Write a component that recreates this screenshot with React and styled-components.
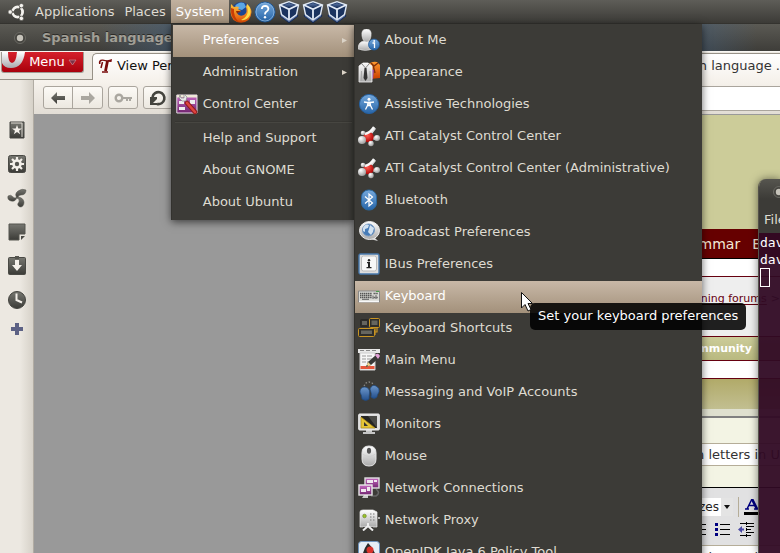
import { useState } from "react";
import styled, { createGlobalStyle, css } from "styled-components";

const GlobalStyle = createGlobalStyle`
  * {
    box-sizing: border-box;
  }

  body {
    margin: 0;
    overflow: hidden;
    background: #999;
    font-family: "DejaVu Sans", sans-serif;
    font-size: 13px;
    line-height: 16px;
  }

  button, input, select {
    margin: 0;
    font: inherit;
    color: inherit;
  }
`;

const Styled = {
  Desktop: styled.div`
    position: relative;
    height: 100vh;
    overflow: hidden;
    display: flex;
    flex-direction: column;
  `,

  Panel: styled.header`
    height: 24px;
    flex: none;
    padding-left: 8px;
    display: flex;
    align-items: center;
    color: #dfdbd2;
    background: linear-gradient(#5e5d58, #3c3b37);
    border-bottom: 1px solid #34332f;
  `,

  PanelMenu: styled.nav`
    height: 100%;
    margin-left: 4px;
    display: flex;
  `,

  PanelItem: styled.div`
    position: relative;
  `,

  PanelButton: styled.button`
    height: 23px;
    padding: 0 5px;
    border: 0;
    white-space: nowrap;
    color: ${({ $open }) => ($open ? "#fff" : "#dfdbd2")};
    background: ${({ $open }) =>
      $open ? "linear-gradient(#c1b19f, #a4927d)" : "none"};
  `,

  Launchers: styled.div`
    display: flex;
    align-items: center;
  `,

  Launcher: styled.button`
    width: 24px;
    height: 23px;
    padding: 0;
    border: 0;
    display: flex;
    align-items: center;
    justify-content: center;
    background: none;
  `,

  Menu: styled.div`
    position: absolute;
    z-index: 3;
    top: 24px;
    left: 0;
    width: ${({ $width }) => $width}px;
    padding: 1px 0 1px 1px;
    background: #3c3b37;
    border-left: 1px solid #33322e;
    box-shadow: 0 2px 8px rgba(0, 0, 0, 0.6);

    ${({ $sub }) =>
      $sub &&
      css`
        top: 0;
        left: 100%;
        padding-left: 0;
      `}
  `,

  MenuItem: styled.button`
    width: 100%;
    height: 32px;
    padding: 0 6px 2px 3px;
    border: 0;
    display: flex;
    align-items: center;
    gap: 5px;
    text-align: left;
    white-space: nowrap;
    color: ${({ $active }) => ($active ? "#fff" : "#dfdbd2")};
    background: ${({ $active }) =>
      $active ? "linear-gradient(#c8b8a7, #a3917b)" : "none"};

    .label {
      flex: 1;
    }
  `,

  MenuIcon: styled.span`
    width: 22px;
    height: 22px;
    flex: none;

    svg {
      display: block;
    }
  `,

  Separator: styled.hr`
    height: 2px;
    margin: 0 2px;
    border: 0;
    border-top: 1px solid #373632;
    background: #474641;
  `,

  TitleBar: styled.div`
    height: 27px;
    flex: none;
    padding: 0 12px;
    display: flex;
    align-items: center;
    gap: 14px;
    color: #a19f96;
    font-weight: 700;
    text-shadow: 0 -1px #2c2b28;
    white-space: nowrap;
    background:
      linear-gradient(90deg, transparent 100px, rgba(66, 94, 124, 0.5) 170px, rgba(66, 94, 124, 0.5) 89%, transparent 97%),
      linear-gradient(#5b5a54, #3e3d39);
  `,

  TabBar: styled.div`
    height: 29px;
    flex: none;
    padding-left: 1px;
    display: flex;
    align-items: flex-start;
    gap: 8px;
    background: #ece8e1;
    border-top: 1px solid #f8f6f2;
    box-shadow: inset 0 -1px #979187;
  `,

  OperaButton: styled.button`
    width: 83px;
    height: 21px;
    padding: 0 6px 0 0;
    border: 1px solid #a09a92;
    border-top: 0;
    border-radius: 0 0 3px 3px;
    display: flex;
    align-items: center;
    justify-content: space-between;
    color: #fff;
    background: linear-gradient(#d5212b, #a9000c);

    svg:first-child {
      align-self: flex-start;
    }
  `,

  Tab: styled.div`
    height: 27px;
    flex: 1;
    margin-top: 1px;
    padding: 0 0 3px 5px;
    border: 1px solid #979187;
    border-width: 1px 0 0 1px;
    border-radius: 5px 0 0 0;
    display: flex;
    align-items: center;
    gap: 4px;
    white-space: nowrap;
    color: #333;
    background: linear-gradient(#fff, #f6f2ec);

    .name {
      color: #111;
    }

    .site {
      margin-left: auto;
    }
  `,

  Body: styled.div`
    flex: 1;
    min-height: 0;
    display: flex;
  `,

  SideBar: styled.aside`
    width: 34px;
    flex: none;
    padding-top: 40px;
    display: flex;
    flex-direction: column;
    align-items: center;
    gap: 14px;
    background: linear-gradient(90deg, #ece8e1 20px, #d6d1c8);
    border-right: 1px solid #b1aca3;
  `,

  SideButton: styled.button`
    width: 20px;
    height: 20px;
    padding: 0;
    border: 0;
    background: none;

    svg {
      display: block;
    }

    &:last-child {
      margin-top: -5px;
    }
  `,

  Main: styled.main`
    flex: 1;
    min-width: 0;
    display: flex;
    flex-direction: column;
  `,

  ToolBar: styled.div`
    height: 35px;
    flex: none;
    padding: 6px 0 4px 9px;
    display: flex;
    gap: 5px;
    background: linear-gradient(#f7f3ed, #e2ddd5);
    border-bottom: 1px solid #999;
  `,

  ButtonGroup: styled.div`
    height: 23px;
    display: flex;
    border: 1px solid #aaa59d;
    border-radius: 3px;
    background: linear-gradient(#fcfaf6, #ece8e0);
  `,

  ToolButton: styled.button`
    width: ${({ $width }) => $width || 28}px;
    padding: 0;
    border: 0;
    display: flex;
    align-items: center;
    justify-content: center;
    background: none;

    & + & {
      border-left: 1px solid #aaa59d;
    }
  `,

  Address: styled.input`
    min-width: 0;
    height: 25px;
    flex: 1;
    border: 1px solid #aaa59d;
    border-right: 0;
    background: #fff;
  `,

  Page: styled.div`
    flex: 1;
    min-height: 0;
    display: flex;
    overflow: hidden;
    background: #999;
  `,

  Forum: styled.section`
    width: 400px;
    margin-left: auto;
    background: #f3f4e4;
  `,

  Strip: styled.div`
    height: ${({ $height }) => $height}px;
    padding-right: ${({ $end }) => $end || 0}px;
    padding-bottom: ${({ $lift }) => $lift || 0}px;
    display: flex;
    align-items: center;
    justify-content: flex-end;
    gap: ${({ $gap }) => $gap || 4}px;
    overflow: hidden;
    white-space: nowrap;
    color: ${({ $color }) => $color || "#333"};
    background: ${({ $fill }) => $fill};
    border-bottom: ${({ $line, $thick }) =>
      $line ? `${$thick ? 2 : 1}px solid ${$line}` : 0};
    font-size: ${({ $size }) => $size || 13}px;
    font-weight: ${({ $bold }) => ($bold ? 700 : 400)};
  `,

  Crumb: styled.a`
    color: #660010;
    text-decoration: underline;
    text-underline-offset: 2px;
  `,

  Editor: styled.div`
    height: 58px;
    padding: 9px 20px 5px 0;
    display: flex;
    flex-direction: column;
    align-items: flex-end;
    gap: 3px;
    background: #e1e1e2;
    border-bottom: 1px solid #b5ad98;
  `,

  EditorRow: styled.div`
    height: 20px;
    padding-right: ${({ $end }) => $end || 0}px;
    display: flex;
    align-items: center;
    gap: ${({ $gap }) => $gap}px;
  `,

  SizeBox: styled.label`
    display: flex;
    height: 18px;
    background: #fff;

    select {
      width: 36px;
      padding: 0 0 0 3px;
      border: 0;
      appearance: none;
      font-size: 12px;
      color: #222;
      background: #fff;
    }

    svg {
      background: #e4e4e4;
    }
  `,

  Divider: styled.span`
    width: 1px;
    height: 20px;
    background: #b5ad98;
  `,

  Terminal: styled.section`
    position: absolute;
    z-index: 1;
    top: 179px;
    right: 0;
    bottom: 0;
    width: 22px;
    overflow: hidden;
    display: flex;
    flex-direction: column;
    border-left: 1px solid #54524a;
    border-radius: 8px 0 0 0;
    box-shadow: 0 0 8px rgba(0, 0, 0, 0.5);
    white-space: nowrap;
  `,

  TerminalTop: styled.div`
    height: 54px;
    flex: none;
    padding: 5px 0 0 5px;
    color: #dfdbd2;
    background: linear-gradient(#56554f, #3c3b37 20px);

    svg {
      display: block;
      margin-left: 7px;
    }

    .title {
      margin-top: 12px;
    }
  `,

  TerminalBody: styled.pre`
    flex: 1;
    margin: 0;
    padding: 1px;
    color: #fff;
    background: rgba(48, 10, 36, 0.95);
    font-family: "DejaVu Sans Mono", monospace;
    font-size: 13px;
    line-height: 17px;

    .cursor {
      width: 10px;
      height: 19px;
      border: 1px solid #fff;
    }
  `,

  Tooltip: styled.div`
    position: absolute;
    z-index: 5;
    top: 303px;
    left: 530px;
    padding: 5px 8px 6px;
    border-radius: 5px;
    white-space: nowrap;
    color: #fff;
    background: rgba(0, 0, 0, 0.87);
  `,

  Pointer: styled.svg`
    position: absolute;
    z-index: 6;
    top: 291px;
    left: 520px;
  `,
};

function Icon({ size = 22, box = 22, children }) {
  return (
    <svg width={size} height={size} viewBox={`0 0 ${box} ${box}`} aria-hidden="true">
      {children}
    </svg>
  );
}

// shared gradients for every drawing on the desktop
function Gradients() {
  const list = {
    blue: ["#76a9dc", "#2765a8"],
    denim: ["#6d97cb", "#234f8c"],
    silver: ["#ffffff", "#aaaaaa"],
    slate: ["#777771", "#3b3b37"],
    purple: ["#c86cc4", "#71246f"],
    opera: ["#ffffff", "#a9a9ad"],
    orange: ["#ff9a2e", "#c83d00"],
    gold: ["#ffc53d", "#e04b05"],
    navy: ["#5c78a8", "#142a55"],
  };
  return (
    <svg width="0" height="0" aria-hidden="true" display="block">
      <defs>
        {Object.entries(list).map(([id, [from, to]]) => (
          <linearGradient key={id} id={id} x1="0" y1="0" x2="0" y2="1">
            <stop offset="0" stopColor={from} />
            <stop offset="1" stopColor={to} />
          </linearGradient>
        ))}
        <radialGradient id="ball" cx="35%" cy="30%" r="75%">
          <stop offset="0" stopColor="#fff" />
          <stop offset="1" stopColor="#999" />
        </radialGradient>
        <radialGradient id="redball" cx="40%" cy="35%" r="70%">
          <stop offset="0" stopColor="#ff5a50" />
          <stop offset="1" stopColor="#a80000" />
        </radialGradient>
      </defs>
    </svg>
  );
}

const UbuntuLogo = () => (
  <Icon size={18} box={18}>
    <circle cx="9.6" cy="9" r="5" fill="none" stroke="#f4f2ee" strokeWidth="2.8" />
    <g stroke="#504f4a" strokeWidth="1.3">
      <path d="M9.6 9L1 9M9.6 9L14 1.4M9.6 9L14 16.6" />
    </g>
    <circle cx="9.6" cy="9" r="3.4" fill="#4d4c47" />
    <g fill="#f4f2ee" stroke="#504f4a" strokeWidth=".7">
      <circle cx="2.2" cy="9" r="2.2" />
      <circle cx="13.4" cy="2.6" r="2.2" />
      <circle cx="13.4" cy="15.4" r="2.2" />
    </g>
  </Icon>
);

const Firefox = () => (
  <Icon>
    <circle cx="11" cy="11" r="10" fill="#1d4590" />
    <path d="M5 5Q9 0 14 2L16 6 12 9 8 8Z" fill="#5aa7e6" />
    <path d="M1 3L4 6Q6 5 9 6L8 8 11 10 7 12Q9 16 14 14 18 11 16 6L17 3Q21 6 21.5 11 21 21 11 21.7 1 21 .5 11Z" fill="url(#gold)" />
    <path d="M17 3Q22 8 20 14 17 20 11 19 18 16 18 9Z" fill="#ffdc46" />
    <path d="M1 7Q0 18 9 21.5Q3 15 4 8Z" fill="#c93e06" />
    <path d="M6 10L11 10 7 12.5Z" fill="#8f2a04" />
  </Icon>
);

const Help = () => (
  <Icon>
    <circle cx="11" cy="11" r="10" fill="url(#blue)" stroke="#1d5797" />
    <circle cx="11" cy="11" r="9" fill="none" stroke="#82afdd" />
    <path d="M7.8 8Q8 4.8 11.2 4.8 14.5 5 14.4 8 14.2 9.6 12 11 11 11.8 11 13.4" fill="none" stroke="#fff" strokeWidth="1.8" />
    <circle cx="11" cy="16.2" r="1.2" fill="#fff" />
  </Icon>
);

const VirtualBox = () => (
  <Icon>
    <path d="M2 15L11 21.8 20 15 18 12 4 12Z" fill="#5e77a8" stroke="#172c57" />
    <path d="M1.5 4L11 .7 20.500 4 18.5 13.5 11 19 3.5 13.5Z" fill="#1b335f" stroke="#dfe8f5" strokeWidth="1.4" />
    <path d="M5 4L11 2.2 17 4 11 7Z" fill="url(#navy)" />
    <path d="M2 4L11 8.3 20 4M11 8.3V18.5" fill="none" stroke="#e4ecf8" strokeWidth="1.8" />
  </Icon>
);

const ControlCenter = () => (
  <Icon>
    <path d="M.8 2H21V20H.8Z" fill="url(#purple)" stroke="#eadfea" />
    <path d="M1 2H21V4.500H1Z" fill="#eee9d7" />
    <path d="M3 8H8V11H3ZM3 14H9V17H3ZM14 7H19V11H14Z" fill="#eee" />
    <path d="M11 10L19 19" stroke="#911c1b" strokeWidth="4.600" strokeLinecap="round" />
    <path d="M11 10L19 19" stroke="#dd4440" strokeWidth="2.600" strokeLinecap="round" />
    <path d="M4 2L5 5 8 5 8 1 11 4 10 8 6 8 3 5Z" fill="#e8e8e8" stroke="#777" strokeWidth=".6" />
  </Icon>
);

const AboutMe = () => (
  <Icon>
    <path d="M0 20Q0 12 7 12Q15 12 15 20Q7 23 0 20Z" fill="url(#silver)" stroke="#ddd" strokeWidth=".6" />
    <path d="M4 7Q3 0 8.5 0T13 7Q12 13 8.5 13T4 7Z" fill="url(#silver)" stroke="#e8e8e8" strokeWidth=".6" />
    <circle cx="16" cy="15.5" r="5.5" fill="url(#blue)" stroke="#1c5798" strokeWidth=".7" />
    <path d="M14.500 14H16.500V19" stroke="#fff" strokeWidth="1.3" fill="none" />
    <circle cx="16.2" cy="12" r=".9" fill="#fff" />
  </Icon>
);

const Appearance = () => (
  <Icon>
    <path d="M11 3Q14 0 19 1L22 4V17L12 18Z" fill="url(#orange)" />
    <path d="M13 2L16 5 20 2M15 4L17 12" stroke="#803009" strokeWidth="1.4" fill="none" />
    <path d="M13 8L16 9 15 18 12 17Z" fill="#9347a1" />
    <path d="M1 5L5 2H10L14 5V21H1Z" fill="url(#silver)" stroke="#f4f4f4" strokeWidth=".8" />
    <path d="M4 3L7.500 7 11 3" fill="#eee" stroke="#888" />
    <path d="M6.500 7H8.500L9.500 17 7.500 20 5.500 17Z" fill="#333" />
    <path d="M3.500 10V20M12 10V20" stroke="#aaa" />
  </Icon>
);

const Accessibility = () => (
  <Icon>
    <circle cx="11" cy="11" r="9.6" fill="url(#blue)" stroke="#2560a0" />
    <circle cx="11" cy="6.2" r="1.5" fill="#fff" />
    <path d="M6 9L9.500 9.500H12.500L16 9M11 9.500V12.500" fill="none" stroke="#fff" strokeWidth="1.500" />
    <path d="M10 9.500H12L12.500 12.500 14.500 16.500M9.500 12.500L7.500 16.500M9.500 12.500L10 9.500M9.500 12.500H12.500" fill="none" stroke="#fff" strokeWidth="1.300" />
  </Icon>
);

const Catalyst = () => (
  <Icon>
    <path d="M4 15L10 12 17 3M10 11L18 14M10 12L14 18M5 8L10 11" stroke="#ddd" strokeWidth="2.6" />
    <circle cx="10.5" cy="12" r="5.2" fill="url(#redball)" />
    <path d="M7 9Q12 8 16 2" stroke="#f8f8f8" strokeWidth="2.3" fill="none" />
    <circle cx="4" cy="15" r="4" fill="url(#ball)" />
    <circle cx="5" cy="8" r="2.3" fill="url(#ball)" />
    <circle cx="13" cy="18.5" r="2.7" fill="url(#ball)" />
    <circle cx="19" cy="13" r="3" fill="url(#ball)" />
  </Icon>
);

const Bluetooth = () => (
  <Icon>
    <rect x="3.5" y="1" width="15" height="20" rx="7" fill="url(#blue)" stroke="#2b689f" />
    <path d="M7 7.5L14.5 14 11 17V5L14.5 8 7 14.5" stroke="#fff" strokeWidth="1.2" fill="none" />
  </Icon>
);

const Broadcast = () => (
  <Icon>
    <path d="M16 16L20 20 12 18Z" fill="#ddd" />
    <ellipse cx="11.5" cy="9.5" rx="10" ry="9" fill="url(#silver)" stroke="#eee" />
    <circle cx="10.500" cy="9" r="6" fill="#477cb7" stroke="#7999c0" />
    <path d="M5 7Q7 2 11 4L10 7 7 8 7 11 5 10ZM12 4L16 7 15 11 13 14 10 11 11 8Z" fill="#d2e2f1" />
  </Icon>
);

const IBus = () => (
  <Icon>
    <rect x="1" y="1" width="20" height="20" rx="1.5" fill="#dedede" stroke="#4879ad" strokeWidth="1.4" />
    <rect x="3.5" y="3" width="15" height="15" rx="2" fill="#f7f7f7" stroke="#bbb" />
    <path d="M9 9H12V14H13.5V15.3H8.5V14H10V10.3H9Z" fill="#222" />
    <circle cx="11" cy="7.2" r="1.2" fill="#222" />
  </Icon>
);

const KeyboardIcon = () => (
  <Icon>
    <path d="M.5 6H21.5V17H.5Z" fill="#d9d9d4" stroke="#888" />
    <path d="M1 16.5H21" stroke="#f8f8f8" strokeWidth="1.5" />
    <path d="M2 8.5H14M2 10.5H14M2 12.5H14M15.5 8.5H20M15.5 12.5H20" stroke="#555" strokeWidth="1.4" strokeDasharray="1.4 .5" />
    <path d="M4 14.3H11M15 10.5V14M18 10V14" stroke="#777" strokeWidth="1.2" />
    <path d="M18 6.5H21" stroke="#4aa34a" />
  </Icon>
);

const Shortcuts = () => (
  <Icon>
    <path d="M17 11V18M19 11V15H17" fill="none" stroke="#c89422" strokeWidth="1.200" />
    <g fill="#2f2e2b" stroke="#c89422">
      <rect x="2.500" y="2.500" width="8" height="7" rx="1" stroke="#2b2a27" />
      <rect x="11.500" y="1.500" width="10" height="9" rx="1" />
      <rect x=".5" y="11.500" width="16" height="8" rx="1" />
    </g>
    <path d="M4 4H9V8H4ZM13.500 3.500H19.500V8H13.500ZM3 13.500H14V17H3Z" fill="#66665f" />
  </Icon>
);

const MainMenu = () => (
  <Icon>
    <path d="M0 0H22V4H0Z" fill="#e8e8e8" />
    <path d="M2 1.5H20" stroke="#888" strokeDasharray="4 2" />
    <path d="M2 4H17V21H2Z" fill="#f6f6f6" stroke="#ccc" />
    <path d="M4 7H8M9 7H14M4 10H8M9 10H14M4 13H8M9 13H12" stroke="#999" />
    <path d="M2.5 17H16.5V20H2.5Z" fill="#e5563b" />
    <path d="M8 18L10 13 18 6 21 9 13 16Z" fill="#393937" />
    <path d="M8 18L10 13 13 16Z" fill="#edd48e" />
    <path d="M17 6Q20 3 22 7L20 10Z" fill="#e1a0d5" />
    <path d="M8 18L9 16 10 17Z" fill="#222" />
  </Icon>
);

const Messaging = () => (
  <Icon>
    <path d="M6 5L8 2 11 1 14 2 16 4" fill="none" stroke="#8b8a86" strokeWidth="1.3" strokeDasharray="1.5 1.7" />
    <path d="M2 11Q2 6 7 6Q12 7 11.5 12 11 15 11 18 8 21 4 18 4 15 2 11Z" fill="url(#denim)" stroke="#1e4b82" strokeWidth=".7" />
    <path d="M12 8Q14 3 18 5Q22 7 21 11Q19 14 19 16Q16 19 13 16Q14 13 12 8Z" fill="url(#denim)" stroke="#1e4b82" strokeWidth=".7" />
  </Icon>
);

const Monitor = () => (
  <Icon>
    <path d="M8 16H14V19H17V21H5V19H8Z" fill="#c5c5c5" />
    <rect x=".7" y="1" width="20.6" height="16" rx="1" fill="#ddd" stroke="#f1f1f1" />
    <path d="M3 3H19V15H3Z" fill="#252524" />
    <path d="M10 3H19V15Z" fill="#4b4b47" />
    <path d="M3 4L17 15H3Z" fill="#e4c537" stroke="#ad8a12" strokeWidth=".7" />
    <path d="M6 9L10 13H6Z" fill="#333" />
  </Icon>
);

const Mouse = () => (
  <Icon>
    <path d="M4 8Q4 1 11 1T18 8V14Q18 21 11 21T4 14Z" fill="url(#silver)" stroke="#e3e3e3" />
    <ellipse cx="11" cy="5.8" rx="2.1" ry="3" fill="#555" />
    <path d="M4.5 9Q11 14 17.5 9" fill="none" stroke="#ccc" strokeWidth=".8" />
  </Icon>
);

const Network = () => (
  <Icon>
    <path d="M18 12Q23 16 18 19H13" stroke="#666" strokeWidth="1.5" fill="none" />
    <rect x="7" y="1" width="14" height="10" fill="url(#purple)" stroke="#e0e0e0" strokeWidth="1.4" />
    <path d="M9 3H15V6H9ZM16 3H19V5H16Z" fill="#f0e7ef" />
    <path d="M6 18H10V21H4Z" fill="#ccc" />
    <rect x="1" y="8" width="13" height="10" fill="url(#purple)" stroke="#e8e8e8" strokeWidth="1.4" />
    <path d="M3 12H8V15H3ZM9 10H12V14H9Z" fill="#f0e7ef" />
  </Icon>
);

const Proxy = () => (
  <Icon>
    <path d="M2 3Q2 1 5 1H15L19 3V18H2Z" fill="url(#silver)" stroke="#eee" strokeWidth=".7" />
    <path d="M12 5H17M12 8H17M12 11H17" stroke="#777" strokeWidth="1.2" strokeDasharray="1.5 1.5" />
    <circle cx="6.5" cy="7" r="1.8" fill="#9ac526" stroke="#647828" strokeWidth=".6" />
    <path d="M5 18H15V22H5Z" fill="#3c3b37" />
    <path d="M10 14V17L5 21.500M10 17L15 21.500" stroke="#eee" strokeWidth="2" fill="none" />
    <path d="M20 9H22" stroke="#ddd" strokeWidth="1.5" />
  </Icon>
);

const OpenJdk = () => (
  <Icon>
    <rect x=".5" y=".5" width="21" height="21" rx="3" fill="#e6edf5" stroke="#6e94be" />
    <path d="M10 2Q17 8 19 20L12 17 4 20Q4 10 10 2Z" fill="#292929" />
    <circle cx="12" cy="9" r="3.5" fill="#d7322b" />
  </Icon>
);

const WindowDot = () => (
  <Icon size={16} box={16}>
    <circle cx="8" cy="8" r="5.500" fill="#45443f" stroke="#6b6a64" />
    <circle cx="8" cy="8" r="3.2" fill="#c6c3ba" />
  </Icon>
);

const SideIcons = {
  Bookmarks: (
    <>
      <path d="M3 2H17V18H3Z" fill="url(#slate)" stroke="#454540" />
      <path d="M4 3H15V17" stroke="#ddd9d1" fill="none" />
      <path d="M10 5L11.3 8.5H15L12 10.7 13.2 14.3 10 12.1 6.8 14.3 8 10.7 5 8.5H8.7Z" fill="#f4f0ea" />
    </>
  ),
  Widgets: (
    <>
      <rect x="1.5" y="1.5" width="17" height="17" rx="2" fill="url(#slate)" stroke="#4a4a45" />
      <path d="M10 3V17M3 10H17M5 5L15 15M15 5L5 15" stroke="#f4f0ea" strokeWidth="2.2" />
      <circle cx="10" cy="10" r="4.8" fill="#f4f0ea" />
      <circle cx="10" cy="10" r="2.2" fill="#555550" />
    </>
  ),
  Unite: (
    <g fill="url(#slate)" stroke="#50504a" strokeWidth=".5">
      <path d="M10 10Q7 6 11 3Q15 0 19 2Q19 7 14 7Q11 7 11 10Z" />
      <path d="M10 9Q9 14 4 13Q0 12 1 8Q4 6 6 9Q8 11 10 9Z" />
      <path d="M10 9Q16 9 17 14Q17 19 13 19Q9 17 12 14Q13 11 10 10Z" />
    </g>
  ),
  Notes: (
    <>
      <path d="M2 2H18V12H12V18H2Z" fill="url(#slate)" stroke="#55554f" />
      <path d="M14 14H18L14 18Z" fill="#494944" />
    </>
  ),
  Transfers: (
    <>
      <rect x="1.5" y="1.5" width="17" height="17" rx="1" fill="url(#slate)" stroke="#4a4a45" />
      <path d="M8 0H12V3H8Z" fill="#55554f" />
      <path d="M8 4H12V9H15L10 15 5 9H8Z" fill="#f4f0ea" />
    </>
  ),
  History: (
    <>
      <circle cx="10" cy="10" r="8.5" fill="url(#slate)" stroke="#44443f" />
      <path d="M9.5 3.5V10L15 12.5" stroke="#f4f0ea" strokeWidth="2" fill="none" />
    </>
  ),
  "Add panel": <path d="M8 4H12V8H16V12H12V16H8V12H4V8H8Z" fill="#5d6285" />,
};

const systemMenu = [
  { label: "Preferences", arrow: true },
  { label: "Administration", arrow: true },
  { label: "Control Center", icon: <ControlCenter /> },
  { separator: true },
  { label: "Help and Support" },
  { label: "About GNOME" },
  { label: "About Ubuntu" },
];

const preferences = [
  ["About Me", <AboutMe />],
  ["Appearance", <Appearance />],
  ["Assistive Technologies", <Accessibility />],
  ["ATI Catalyst Control Center", <Catalyst />],
  ["ATI Catalyst Control Center (Administrative)", <Catalyst />],
  ["Bluetooth", <Bluetooth />],
  ["Broadcast Preferences", <Broadcast />],
  ["IBus Preferences", <IBus />],
  ["Keyboard", <KeyboardIcon />],
  ["Keyboard Shortcuts", <Shortcuts />],
  ["Main Menu", <MainMenu />],
  ["Messaging and VoIP Accounts", <Messaging />],
  ["Monitors", <Monitor />],
  ["Mouse", <Mouse />],
  ["Network Connections", <Network />],
  ["Network Proxy", <Proxy />],
  ["OpenJDK Java 6 Policy Tool", <OpenJdk />],
];

function MenuEntry({ label, icon, arrow, active, onMouseEnter }) {
  return (
    <Styled.MenuItem role="menuitem" $active={active} onMouseEnter={onMouseEnter}>
      <Styled.MenuIcon>{icon}</Styled.MenuIcon>
      <span className="label">{label}</span>
      {arrow && (
        <Icon size={7} box={7}>
          <path d="M1 1L6 3.5 1 6Z" fill="#dcd4c8" />
        </Icon>
      )}
    </Styled.MenuItem>
  );
}

function SystemMenu() {
  const [selected, setSelected] = useState("Keyboard");
  return (
    <Styled.Menu role="menu" $width={183}>
      {systemMenu.map((item, index) =>
        item.separator ? (
          <Styled.Separator key={index} />
        ) : (
          <MenuEntry key={item.label} {...item} active={item.label === "Preferences"} />
        )
      )}
      <Styled.Menu role="menu" $sub $width={348}>
        {preferences.map(([label, icon]) => (
          <MenuEntry
            key={label}
            label={label}
            icon={icon}
            active={label === selected}
            onMouseEnter={() => setSelected(label)}
          />
        ))}
      </Styled.Menu>
    </Styled.Menu>
  );
}

function TopPanel() {
  return (
    <Styled.Panel>
      <UbuntuLogo />
      <Styled.PanelMenu>
        {["Applications", "Places", "System"].map((name) => (
          <Styled.PanelItem key={name}>
            <Styled.PanelButton $open={name === "System"}>{name}</Styled.PanelButton>
            {name === "System" && <SystemMenu />}
          </Styled.PanelItem>
        ))}
      </Styled.PanelMenu>
      <Styled.Launchers>
        <Styled.Launcher aria-label="Firefox"><Firefox /></Styled.Launcher>
        <Styled.Launcher aria-label="Help"><Help /></Styled.Launcher>
        {[1, 2, 3].map((n) => (
          <Styled.Launcher key={n} aria-label={`Virtual machine ${n}`}>
            <VirtualBox />
          </Styled.Launcher>
        ))}
      </Styled.Launchers>
    </Styled.Panel>
  );
}

function Tabs() {
  return (
    <Styled.TabBar>
      <Styled.OperaButton>
        <svg width="24" height="16" viewBox="0 0 24 16" aria-hidden="true">
          <path d="M0 0H6Q6 11 10 11T15 0H23Q21 16 9 16Q2 16 0 11Z" fill="url(#opera)" />
        </svg>
        Menu
        <Icon size={9} box={9}>
          <path d="M1 2H8L4.5 7Z" fill="#7b3146" stroke="#d08a91" strokeWidth=".7" />
        </Icon>
      </Styled.OperaButton>
      <Styled.Tab>
        <Icon size={15} box={15}>
          <path d="M1 6Q0 1 5 1.5Q10 3 14 1L13.5 4Q9 4 6 3 2 2 2.5 6Z" fill="#780b0b" />
          <path d="M9.5 3L7.5 13" stroke="#780b0b" strokeWidth="2.8" fill="none" />
          <path d="M4 14H10M4.5 4L3 10" stroke="#780b0b" strokeWidth="1.5" fill="none" />
        </Icon>
        <span className="name">View Per</span>
        <span className="site">Spanish language .</span>
      </Styled.Tab>
    </Styled.TabBar>
  );
}

function ToolBar() {
  return (
    <Styled.ToolBar>
      <Styled.ButtonGroup>
        <Styled.ToolButton aria-label="Back">
          <Icon size={16} box={16}>
            <path d="M1 8L7 2V6H15V10H7V14Z" fill="url(#slate)" />
          </Icon>
        </Styled.ToolButton>
        <Styled.ToolButton aria-label="Forward" $width={30}>
          <Icon size={16} box={16}>
            <path d="M15 8L9 2V6H1V10H9V14Z" fill="#aaa7a0" />
          </Icon>
        </Styled.ToolButton>
      </Styled.ButtonGroup>
      <Styled.ButtonGroup>
        <Styled.ToolButton aria-label="Password">
          <Icon size={18} box={18}>
            <circle cx="5" cy="9" r="3.3" fill="none" stroke="#aaa7a0" strokeWidth="2.4" />
            <path d="M8 9H18M13 9V12M16 9V12" stroke="#aaa7a0" strokeWidth="2" />
          </Icon>
        </Styled.ToolButton>
      </Styled.ButtonGroup>
      <Styled.ButtonGroup>
        <Styled.ToolButton aria-label="Reload">
          <Icon size={18} box={18}>
            <path d="M3.5 8A6 6 0 1 1 8 15" stroke="#45453f" strokeWidth="2.6" fill="none" />
            <path d="M1 8H8V10L4 14H8V16H1Z" fill="#45453f" />
          </Icon>
        </Styled.ToolButton>
      </Styled.ButtonGroup>
      <Styled.Address aria-label="Address" />
    </Styled.ToolBar>
  );
}

function Forum() {
  return (
    <Styled.Forum>
      <Styled.Strip $height={114} $fill="#cccc99" />
      <Styled.Strip $height={30} $fill="#660000" $line="#000" $color="#f3e9d8" $size={14} $end={19} $gap={12}>
        <span>Grammar</span>
        <span>E</span>
      </Styled.Strip>
      <Styled.Strip $height={18} $fill="#fff" $line="#660010" />
      <Styled.Strip $height={60} $fill="#eee" $line="#660010" $size={11} $lift={15}>
        <Styled.Crumb href="#forums">learning forums</Styled.Crumb>
        <span>&gt;</span>
      </Styled.Strip>
      <Styled.Strip $height={24} $fill="linear-gradient(#cccc99, #b9b980)" $line="#660010" $color="#fff" $size={11} $end={28} $bold>
        Community
      </Styled.Strip>
      <Styled.Strip $height={18} $fill="#fff" $line="#660010" />
      <Styled.Strip $height={30} $fill="linear-gradient(#b1aa69, #c2bf91)" />
      <Styled.Strip $height={9} $fill="#dfe0cf" $line="#808080" $thick />
      <Styled.Strip $height={26} $fill="#f3f4e4" $line="#b5ad98" />
      <Styled.Strip $height={22} $fill="#fff" $line="#b5ad98">
        Spanish letters in U
      </Styled.Strip>
      <Styled.Strip $height={22} $fill="#f3f4e4" $line="#000" />
      <Editor />
      <Styled.Strip $height={24} $fill="#fff">Spanish letters in U</Styled.Strip>
    </Styled.Forum>
  );
}

function Editor() {
  return (
    <Styled.Editor>
      <Styled.EditorRow $gap={5}>
        <Styled.SizeBox>
          <select aria-label="Font size">
            <option>Sizes</option>
          </select>
          <svg width="12" height="18" viewBox="0 0 12 18" aria-hidden="true">
            <path d="M3 7H9L6 11Z" fill="#111" />
          </svg>
        </Styled.SizeBox>
        <Styled.Divider />
        <Icon size={16} box={16}>
          <path d="M1 10H5M10 10H15M3 10L8 0 13 10M5 6.5H11" fill="none" stroke="#000080" strokeWidth="1.5" />
          <path d="M8 0L13 10" stroke="#000080" strokeWidth="2.6" />
          <path d="M0 13H16V16H0Z" fill="#000" />
        </Icon>
      </Styled.EditorRow>
      <Styled.EditorRow $gap={8} $end={6}>
        <Icon size={16} box={16}>
          <path d="M5 2.5H16M5 7.5H16M5 12.5H16" stroke="#000" />
        </Icon>
        <Icon size={16} box={16}>
          <path d="M6 2.5H16M6 7.5H16M6 12.5H16" stroke="#000" />
          <path d="M1 1H4V4H1ZM1 6H4V9H1ZM1 11H4V14H1Z" fill="#000080" />
        </Icon>
        <Icon size={16} box={16}>
          <path d="M2 1.5H16M8 4.5H16M8 7.5H13M8 10.5H16M2 13.5H13" stroke="#000" />
          <path d="M8.5 0V16" stroke="#000" strokeDasharray="1 1" />
          <path d="M0 7.5L4 4V6.5H6V8.5H4V11Z" fill="#4a4aa5" />
        </Icon>
      </Styled.EditorRow>
    </Styled.Editor>
  );
}

function Terminal() {
  return (
    <Styled.Terminal>
      <Styled.TerminalTop>
        <WindowDot />
        <div className="title">File</div>
      </Styled.TerminalTop>
      <Styled.TerminalBody>
        {"dav\ndav"}
        <div className="cursor" />
      </Styled.TerminalBody>
    </Styled.Terminal>
  );
}

function App() {
  return (
    <Styled.Desktop>
      <GlobalStyle />
      <Gradients />
      <TopPanel />
      <Styled.TitleBar>
        <WindowDot />
        Spanish language
      </Styled.TitleBar>
      <Tabs />
      <Styled.Body>
        <Styled.SideBar>
          {Object.entries(SideIcons).map(([name, drawing]) => (
            <Styled.SideButton key={name} aria-label={name}>
              <Icon size={20} box={20}>{drawing}</Icon>
            </Styled.SideButton>
          ))}
        </Styled.SideBar>
        <Styled.Main>
          <ToolBar />
          <Styled.Page>
            <Forum />
          </Styled.Page>
        </Styled.Main>
      </Styled.Body>
      <Terminal />
      <Styled.Tooltip role="tooltip">Set your keyboard preferences</Styled.Tooltip>
      <Styled.Pointer width="14" height="22" viewBox="0 0 14 22" aria-hidden="true">
        <path d="M1.5 1.5V17L5 13.5 8 20 11 18.5 8 12.5H12.5Z" fill="#fff" stroke="#111" />
      </Styled.Pointer>
    </Styled.Desktop>
  );
}

export default App;
